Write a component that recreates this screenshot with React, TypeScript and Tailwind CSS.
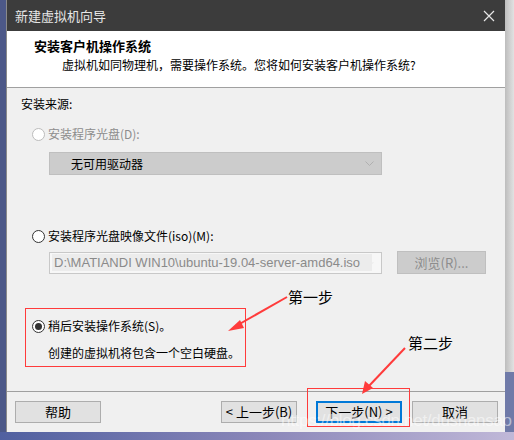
import React from "react";

const CJK = "font-['Microsoft_YaHei','Noto_Sans_CJK_SC',sans-serif]";

function Radio({ checked = false, disabled = false }: { checked?: boolean; disabled?: boolean }) {
  return (
    <span
      className={`flex h-[13px] w-[13px] shrink-0 items-center justify-center rounded-full border bg-white ${
        disabled ? "border-[#bcbcbc]" : "border-[#333]"
      }`}
    >
      {checked && <span className="h-[7px] w-[7px] rounded-full bg-[#333]" />}
    </span>
  );
}

function Chevron({ color }: { color: string }) {
  return (
    <svg width="9" height="6" viewBox="0 0 9 6">
      <path d="M0.5 0.5 L4.5 4.5 L8.5 0.5" fill="none" stroke={color} strokeWidth="1" />
    </svg>
  );
}

function Btn({ label, primary = false }: { label: string; primary?: boolean }) {
  return (
    <div
      className={`flex h-[22px] items-center justify-center whitespace-nowrap bg-[#e1e1e1] text-[13px] text-black ${
        primary ? "border-2 border-[#0078d7]" : "border border-[#adadad]"
      }`}
    >
      {label}
    </div>
  );
}

export default function App() {
  return (
    <div className={`relative h-[440px] w-[514px] overflow-hidden bg-[#5b6a9c] ${CJK}`}>
      <div className="flex h-[432px]">
        <div className="w-[6px] bg-[#4c5888]" />
        <div className="flex w-[499px] flex-col border-l border-[#8a8a8a] bg-[#f0f0f0]">
          {/* title bar */}
          <div className="flex h-[31px] items-center justify-between bg-[#3c3c3c] pl-[8px] pr-[10px] text-[13px] text-[#e6e6e6]">
            <span>新建虚拟机向导</span>
            <svg width="12" height="12" viewBox="0 0 12 12">
              <path d="M1 1 L11 11 M11 1 L1 11" stroke="#e6e6e6" strokeWidth="1.2" />
            </svg>
          </div>

          {/* header */}
          <div className="flex h-[57px] flex-col border-b border-[#a0a0a0] bg-white pl-[27px] pt-[5px] text-[12px] text-black">
            <div className="text-[13px] font-bold leading-[20px]">安装客户机操作系统</div>
            <div className="pl-[28px] leading-[18px]">虚拟机如同物理机，需要操作系统。您将如何安装客户机操作系统?</div>
          </div>

          {/* body */}
          <div className="flex flex-1 flex-col pl-[14px] text-[12px] text-black">
            <div className="mt-[7px] leading-[18px]">安装来源:</div>

            <div className="mt-[12px] flex items-center gap-[3px] pl-[11px] leading-[18px] text-[#8d8d8d]">
              <Radio disabled />
              <span>安装程序光盘(D):</span>
            </div>
            <div className="ml-[28px] mt-[9px] flex h-[23px] w-[333px] items-center justify-between border border-[#bfbfbf] bg-[#cccccc] pl-[21px] pr-[7px]">
              <span>无可用驱动器</span>
              <Chevron color="#b0b0b0" />
            </div>

            <div className="mt-[52px] flex items-center gap-[3px] pl-[11px] leading-[18px]">
              <Radio />
              <span>安装程序光盘映像文件(iso)(M):</span>
            </div>
            <div className="mt-[6px] flex items-center gap-[15px] pl-[28px]">
              <div className="flex h-[22px] w-[333px] items-center justify-between border border-[#c8c8c8] bg-[#f7f7f7] pl-[2px] pr-[7px]">
                <span className="flex h-[17px] items-center whitespace-nowrap bg-[#ececec] pl-[2px] pr-[12px] font-['Liberation_Sans',sans-serif] text-[13px] text-[#8a8a8a]">
                  D:\MATIANDI WIN10\ubuntu-19.04-server-amd64.iso
                </span>
                <Chevron color="#b0b0b0" />
              </div>
              <div className="flex h-[23px] w-[89px] items-center justify-center border border-[#bfbfbf] bg-[#cccccc] text-[13px] text-[#8d8d8d]">
                浏览(R)...
              </div>
            </div>

            <div className="ml-[4px] mt-[34px] flex h-[59px] w-[221px] flex-col border border-[#ff3b3b] pl-[6px] pt-[8px]">
              <div className="flex items-center gap-[3px] leading-[18px]">
                <Radio checked />
                <span>稍后安装操作系统(S)。</span>
              </div>
              <div className="mt-[9px] pl-[16px] leading-[18px]">创建的虚拟机将包含一个空白硬盘。</div>
            </div>
          </div>

          {/* footer */}
          <div className="flex h-[41px] items-start border-t border-[#a0a0a0] pt-[9px]">
            <div className="ml-[8px] w-[86px]">
              <Btn label="帮助" />
            </div>
            <div className="ml-[120px] w-[76px]">
              <Btn label="< 上一步(B)" />
            </div>
            <div className="ml-[19px] w-[86px]">
              <Btn label="下一步(N) >" primary />
            </div>
            <div className="ml-[10px] w-[86px]">
              <Btn label="取消" />
            </div>
          </div>
        </div>
        <div className="flex w-[9px] flex-col">
          <div className="h-[372px] bg-gradient-to-r from-[#bdbdbd] to-[#e2e2e2]" />
          <div className="flex-1 bg-[#6f7aa8]" />
        </div>
      </div>
      <div className="h-[8px] bg-gradient-to-r from-[#5060a0] via-[#8a86b8] to-[#c0b8d8]" />

      {/* annotations */}
      <div className="absolute left-[288px] top-[287px] text-[15px] leading-[20px] text-black">第一步</div>
      <div className="absolute left-[408px] top-[333px] text-[15px] leading-[20px] text-black">第二步</div>
      <div className="absolute left-[307px] top-[388px] h-[39px] w-[103px] border border-[#ff3b3b]" />
      <svg className="absolute left-0 top-0" width="514" height="440">
        <line x1="287" y1="297" x2="236" y2="326" stroke="#ff3b3b" strokeWidth="2" />
        <polygon points="228,331 240,320 244,328" fill="#ff3b3b" />
        <line x1="405" y1="348" x2="368" y2="387" stroke="#ff3b3b" strokeWidth="2" />
        <polygon points="362,394 365,381 373,388" fill="#ff3b3b" />
      </svg>
      <div className="absolute left-[281px] top-[411px] font-['Liberation_Sans',sans-serif] text-[17px] leading-[20px] tracking-[-0.3px] text-white/50">
        https://blog.csdn.net/dushansao
      </div>
    </div>
  );
}
